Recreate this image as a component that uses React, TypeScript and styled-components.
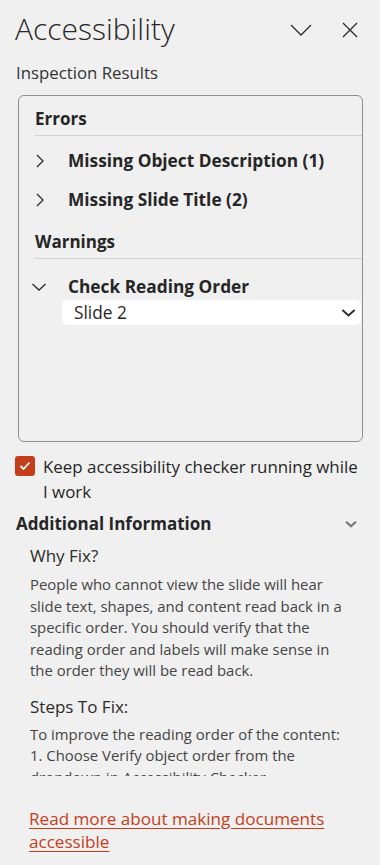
import React from "react";
import styled, {createGlobalStyle} from "styled-components";

const GlobalStyle = createGlobalStyle`
  html, body {
    margin: 0;
    padding: 0;
    background: #f0f0f0;
  }
  body {
    font-family: "Open Sans", "Noto Sans", sans-serif;
    color: #262626;
  }
`;

const Pane = styled.div`
  width: 380px;
  height: 865px;
  box-sizing: border-box;
  padding: 0 15px;
  overflow: hidden;
  background: #f0f0f0;
`;

const Header = styled.header`
  height: 60px;
  display: flex;
  align-items: center;
  justify-content: space-between;
`;

const Title = styled.h1`
  margin: -2px 0 0 0;
  font-size: 30px;
  font-weight: 300;
  line-height: 40px;
  color: #262626;
`;

const HeaderButtons = styled.div`
  display: flex;
  align-items: center;
  gap: 30px;
  padding-right: 7px;
`;

const IconButton = styled.button`
  border: 0;
  background: none;
  padding: 0;
  display: flex;
  align-items: center;
  justify-content: center;
  color: #2b2b2b;
`;

const Subtitle = styled.div`
  margin-left: 1px;
  font-size: 16.8px;
  line-height: 26px;
  color: #333;
`;

const ResultsBox = styled.div`
  margin: 9px 2px 0 3px;
  height: 347px;
  box-sizing: border-box;
  border: 1px solid #8f8f8f;
  border-radius: 6px;
  padding: 11px 0 0 16px;
`;

const GroupTitle = styled.div<{ $first?: boolean }>`
  margin-top: ${(p) => (p.$first ? 0 : 16)}px;
  padding-bottom: 4px;
  border-bottom: 1px solid #d1d1d1;
  font-size: 17px;
  font-weight: 700;
  line-height: 24px;
`;

const Issue = styled.div<{ $top?: number }>`
  display: flex;
  align-items: center;
  padding: ${(p) => p.$top ?? 13}px 0 2px;
  font-size: 17.3px;
  font-weight: 700;
  line-height: 24px;
`;

const Twisty = styled.span`
  width: 33px;
  flex: none;
  display: flex;
  align-items: center;
`;

const SlideSelect = styled.div`
  margin: -1px 1px 0 27px;
  height: 25px;
  background: #fff;
  border-radius: 5px;
  display: flex;
  align-items: center;
  justify-content: space-between;
  padding: 0 5px 0 12px;
  font-size: 17.3px;
  color: #262626;
`;

const CheckRow = styled.label`
  display: flex;
  align-items: flex-start;
  gap: 8px;
  margin-top: 12px;
  padding-right: 4px;
  font-size: 16.9px;
  line-height: 25px;
  color: #262626;
`;

const CheckBox = styled.span`
  flex: none;
  width: 20px;
  height: 20px;
  margin-top: 2px;
  border-radius: 3px;
  background: #c43e1c;
  display: flex;
  align-items: center;
  justify-content: center;
`;

const InfoHeader = styled.div`
  display: flex;
  align-items: center;
  justify-content: space-between;
  margin-top: 7px;
  padding: 0 8px 0 1px;
  font-size: 17px;
  font-weight: 700;
  line-height: 26px;
`;

const InfoBody = styled.div`
  padding: 0 15px 0 15px;
`;

const InfoHeading = styled.div<{ $top: number }>`
  margin-top: ${(p) => p.$top}px;
  font-size: 17px;
  line-height: 26px;
  color: #2b2b2b;
`;

const Paragraph = styled.p<{ $top: number }>`
  margin: ${(p) => p.$top}px 0 0;
  font-size: 14.9px;
  line-height: 21.5px;
  color: #454545;
`;

const Clipped = styled.div`
  height: 56px;
  overflow: hidden;
`;

const MoreLink = styled.a`
  display: block;
  margin: 31px 0 0 14px;
  font-size: 17.1px;
  line-height: 23px;
  color: #c43e1c;
  text-decoration: underline;
  text-underline-offset: 3px;
`;

function ChevronRight() {
  return (
    <svg width="10" height="16" viewBox="0 0 10 16">
      <path d="M2 2 L8 8 L2 14" fill="none" stroke="#2b2b2b" strokeWidth="1.3" />
    </svg>
  );
}

function ChevronDown({size = 16, stroke = 1.3, color = "#2b2b2b"}: { size?: number; stroke?: number; color?: string }) {
  return (
    <svg width={size} height={size / 2 + 2} viewBox="0 0 16 10">
      <path d="M1.5 2 L8 8 L14.5 2" fill="none" stroke={color} strokeWidth={stroke} />
    </svg>
  );
}

export default function App() {
  return (
    <Pane>
      <GlobalStyle />
      <Header>
        <Title>Accessibility</Title>
        <HeaderButtons>
          <IconButton aria-label="Options">
            <svg width="22" height="12" viewBox="0 0 22 12">
              <path d="M1 1 L11 11 L21 1" fill="none" stroke="#2b2b2b" strokeWidth="1.3" />
            </svg>
          </IconButton>
          <IconButton aria-label="Close">
            <svg width="16" height="16" viewBox="0 0 16 16">
              <path d="M1 1 L15 15 M15 1 L1 15" fill="none" stroke="#2b2b2b" strokeWidth="1.3" />
            </svg>
          </IconButton>
        </HeaderButtons>
      </Header>
      <Subtitle>Inspection Results</Subtitle>

      <ResultsBox>
        <GroupTitle $first>Errors</GroupTitle>
        <Issue>
          <Twisty><ChevronRight /></Twisty>
          Missing Object Description (1)
        </Issue>
        <Issue>
          <Twisty><ChevronRight /></Twisty>
          Missing Slide Title (2)
        </Issue>
        <GroupTitle>Warnings</GroupTitle>
        <Issue $top={16}>
          <Twisty style={{marginLeft: -4}}><ChevronDown /></Twisty>
          <span style={{marginLeft: 4}}>Check Reading Order</span>
        </Issue>
        <SlideSelect>
          Slide 2
          <ChevronDown size={15} stroke={2} />
        </SlideSelect>
      </ResultsBox>

      <CheckRow>
        <CheckBox>
          <svg width="12" height="10" viewBox="0 0 12 10">
            <path d="M1.5 5 L4.5 8 L10.5 1.5" fill="none" stroke="#fff" strokeWidth="1.8" />
          </svg>
        </CheckBox>
        <span>Keep accessibility checker running while I work</span>
      </CheckRow>

      <InfoHeader>
        Additional Information
        <ChevronDown size={12} stroke={3} color="#777" />
      </InfoHeader>
      <InfoBody>
        <InfoHeading $top={6}>Why Fix?</InfoHeading>
        <Paragraph $top={5}>
          People who cannot view the slide will hear slide text, shapes, and content read back in a specific
          order. You should verify that the reading order and labels will make sense in the order they will be
          read back.
        </Paragraph>
        <InfoHeading $top={12}>Steps To Fix:</InfoHeading>
        <Clipped>
          <Paragraph $top={4}>
            To improve the reading order of the content:
            <br />
            1. Choose Verify object order from the dropdown in Accessibility Checker.
          </Paragraph>
        </Clipped>
      </InfoBody>
      <MoreLink href="#">Read more about making documents accessible</MoreLink>
    </Pane>
  );
}
